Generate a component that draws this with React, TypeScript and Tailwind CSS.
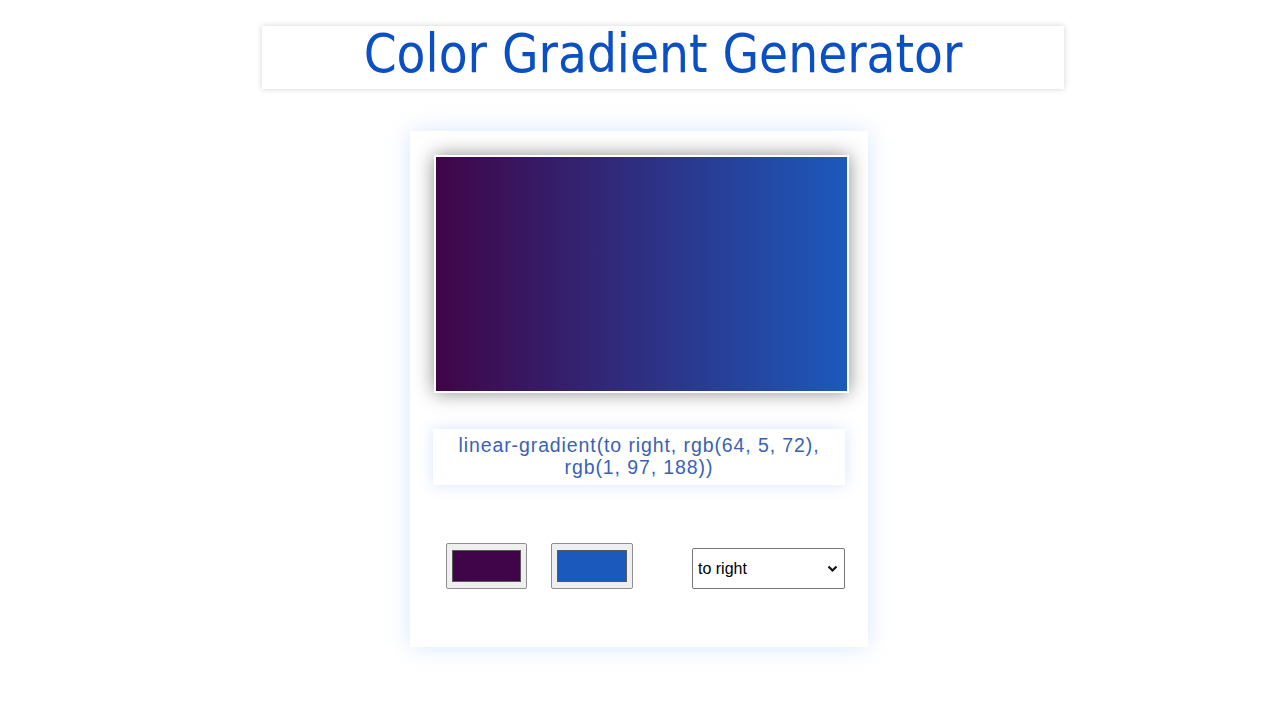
import React from "react";

export default function App() {
  return (
    <div className="w-[1280px] h-[720px] bg-white overflow-hidden pt-[26px]">
      <div className="ml-[262px] w-[802px] h-[63px] bg-white shadow-[0_0_6px_rgba(0,0,0,0.18)] flex items-center justify-center">
        <h1
          className="text-[52.5px] leading-none text-[#0b4fc4] pb-[6px]"
          style={{ fontFamily: '"DejaVu Sans Condensed", "DejaVu Sans", sans-serif' }}
        >
          Color Gradient Generator
        </h1>
      </div>

      <div className="ml-[410px] mt-[42px] w-[458px] h-[516px] bg-white shadow-[0_0_22px_rgba(120,170,255,0.28)] pt-[24px]">
        <div className="ml-[24px] w-[415px] h-[238px] border-2 border-white shadow-[0_0_18px_rgba(0,0,0,0.45)] bg-[linear-gradient(to_right,#400548,#1c59bc)]" />

        <div
          className="ml-[23px] mt-[36px] w-[412px] h-[56px] bg-white shadow-[0_0_14px_rgba(120,170,255,0.3)] flex items-center justify-center text-center text-[19.5px] leading-[22px] tracking-[0.9px] text-[#3a62b3] pb-[2px]"
          style={{ fontFamily: '"Liberation Sans", Arial, sans-serif' }}
        >
          linear-gradient(to right, rgb(64, 5, 72),
          <br />
          rgb(1, 97, 188))
        </div>

        <div className="mt-[58px] flex items-start">
          <div className="ml-[36px] w-[81px] h-[46px] bg-[#efefef] border border-[#8f8f8f] rounded-[2px] flex items-center justify-center">
            <div className="w-[69px] h-[32px] bg-[#400548] border border-[#5a5a5a]" />
          </div>
          <div className="ml-[24px] w-[82px] h-[46px] bg-[#efefef] border border-[#8f8f8f] rounded-[2px] flex items-center justify-center">
            <div className="w-[70px] h-[32px] bg-[#1c59bc] border border-[#5a5a5a]" />
          </div>
          <div className="relative ml-[59px] mt-[5px] w-[153px] h-[41px]">
            <select
              defaultValue="to right"
              className="w-full h-full border border-[#767676] rounded-[2px] bg-white text-[16px] text-black pl-[5px] pr-[24px] appearance-none outline-none"
              style={{ fontFamily: '"Liberation Sans", Arial, sans-serif' }}
            >
              <option value="to right">to right</option>
              <option value="to left">to left</option>
              <option value="to top">to top</option>
              <option value="to bottom">to bottom</option>
            </select>
            <svg
              className="absolute right-[7px] top-[17px] pointer-events-none"
              width="11"
              height="8"
              viewBox="0 0 11 8"
            >
              <path d="M1.5 1.5 L5.5 5.5 L9.5 1.5" fill="none" stroke="#111" strokeWidth="2.2" />
            </svg>
          </div>
        </div>
      </div>
    </div>
  );
}
